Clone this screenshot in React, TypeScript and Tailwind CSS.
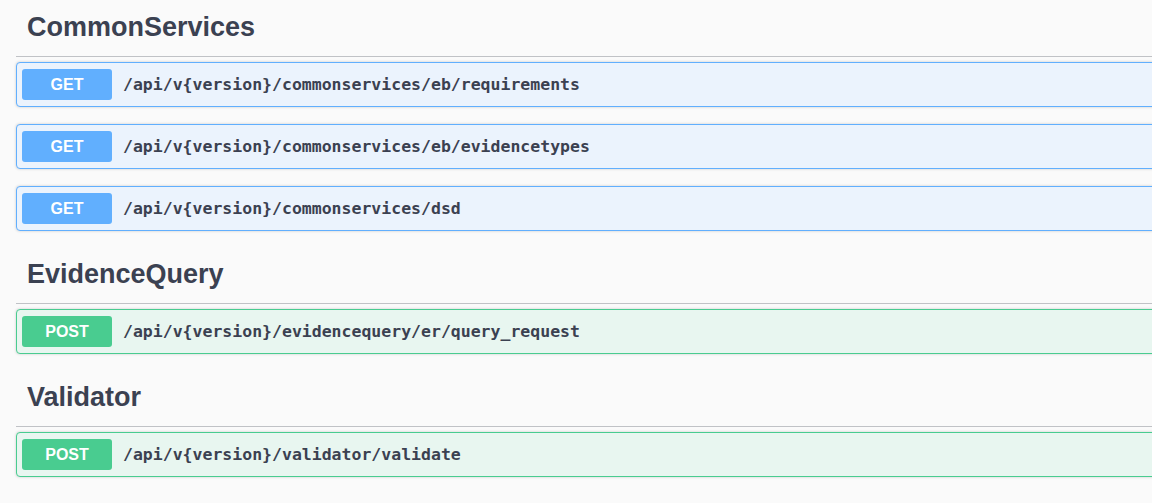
type Method = "GET" | "POST";

type Operation = {
  method: Method;
  path: string;
};

type Tag = {
  name: string;
  operations: Operation[];
};

const tags: Tag[] = [
  {
    name: "CommonServices",
    operations: [
      { method: "GET", path: "/api/v{version}/commonservices/eb/requirements" },
      { method: "GET", path: "/api/v{version}/commonservices/eb/evidencetypes" },
      { method: "GET", path: "/api/v{version}/commonservices/dsd" },
    ],
  },
  {
    name: "EvidenceQuery",
    operations: [{ method: "POST", path: "/api/v{version}/evidencequery/er/query_request" }],
  },
  {
    name: "Validator",
    operations: [{ method: "POST", path: "/api/v{version}/validator/validate" }],
  },
];

const methodStyles: Record<Method, { block: string; badge: string }> = {
  GET: {
    block: "border-[#61affe] bg-[#ebf3fd]",
    badge: "bg-[#61affe]",
  },
  POST: {
    block: "border-[#49cc90] bg-[#e8f6f0]",
    badge: "bg-[#49cc90]",
  },
};

const OperationRow = ({ op }: { op: Operation }) => {
  const style = methodStyles[op.method];
  return (
    <div
      className={`flex h-[45px] items-center rounded-[4px] border pl-[5px] shadow-[0_0_3px_rgba(0,0,0,0.19)] ${style.block}`}
    >
      <span
        className={`flex h-[31px] w-[90px] shrink-0 items-center justify-center rounded-[3px] pt-[1px] text-[16px] font-bold text-white ${style.badge}`}
        style={{ fontFamily: '"Liberation Sans", Arial, sans-serif' }}
      >
        {op.method}
      </span>
      <span
        className="mt-[2px] ml-[11px] text-[16.5px] font-bold text-[#3b4151]"
        style={{ fontFamily: '"DejaVu Sans Mono", "Liberation Mono", monospace' }}
      >
        {op.path}
      </span>
    </div>
  );
};

export default function App() {
  return (
    <div className="min-h-[503px] w-[1152px] overflow-hidden bg-[#fafafa]">
      <div className="flex w-[1200px] flex-col gap-[16px] pl-[16px]">
        {tags.map((tag) => (
          <section key={tag.name} className="flex flex-col">
            {/* tag heading with divider */}
            <h3
              className="mb-[5px] border-b border-[#3b4151]/30 pt-[10px] pb-[12px] pl-[11px] text-[27px] leading-[34px] font-bold text-[#3b4151]"
              style={{ fontFamily: '"Liberation Sans", Arial, sans-serif' }}
            >
              {tag.name}
            </h3>
            <div className="flex flex-col gap-[17px]">
              {tag.operations.map((op) => (
                <OperationRow key={op.path} op={op} />
              ))}
            </div>
          </section>
        ))}
      </div>
    </div>
  );
}
